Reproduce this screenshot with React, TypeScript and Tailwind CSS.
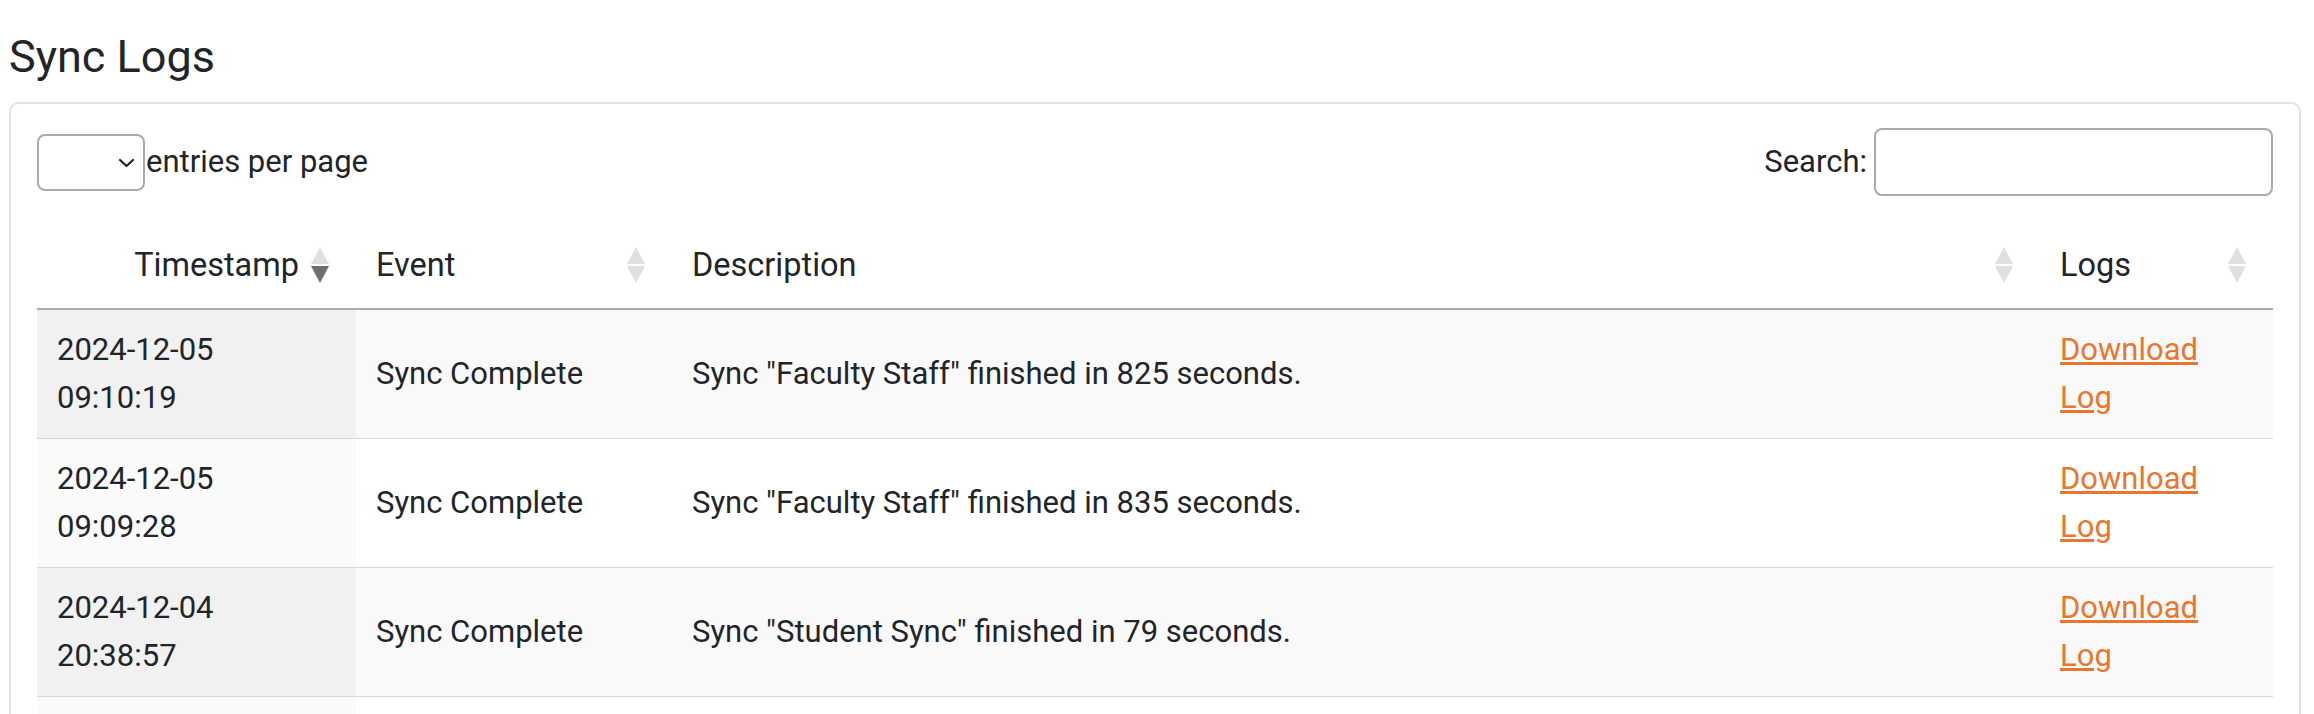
import React from 'react';

type LogRow = { date: string; time: string; event: string; desc: string };

const rows: LogRow[] = [
  { date: '2024-12-05', time: '09:10:19', event: 'Sync Complete', desc: 'Sync "Faculty Staff" finished in 825 seconds.' },
  { date: '2024-12-05', time: '09:09:28', event: 'Sync Complete', desc: 'Sync "Faculty Staff" finished in 835 seconds.' },
  { date: '2024-12-04', time: '20:38:57', event: 'Sync Complete', desc: 'Sync "Student Sync" finished in 79 seconds.' },
  { date: '2024-12-04', time: '20:37:41', event: 'Sync Complete', desc: 'Sync "Student Sync" finished in 81 seconds.' },
];

/** Sort arrows, DataTables style. dir: which half is dark. */
const SortIcon: React.FC<{ dir?: 'asc' | 'desc' }> = ({ dir }) => (
  <svg width="18" height="36" viewBox="0 0 18 36" className="shrink-0">
    <polygon points="9,0 18,17 0,17" fill={dir === 'asc' ? '#6e6e6e' : '#e0e0e0'} />
    <polygon points="0,19 18,19 9,36" fill={dir === 'desc' ? '#6e6e6e' : '#e0e0e0'} />
  </svg>
);

export default function App() {
  return (
    <div className="min-h-screen bg-white pl-[9px] pr-[13px] pt-[30px] font-['Roboto','Liberation_Sans',sans-serif] text-[31px] leading-[48px] text-[#212529]">
      <h3 className="text-[45px] leading-[54px] font-normal mb-[18px]">Sync Logs</h3>

      <div className="border-2 border-[#e2e2e2] rounded-[10px] px-[26px] pt-[24px] pb-[30px]">
        {/* controls */}
        <div className="flex items-center justify-between h-[68px] mb-[32px]">
          <div className="flex items-center gap-[1px]">
            <div className="relative w-[108px] h-[57px]">
              <select className="appearance-none w-full h-full border-2 border-[#ababab] rounded-[8px] bg-white outline-none" defaultValue="" />
              <svg width="17" height="10" viewBox="0 0 17 10" className="absolute right-[10px] top-[24px] pointer-events-none">
                <path d="M2 2 L8.5 8 L15 2" fill="none" stroke="#222" strokeWidth="2.2" strokeLinecap="round" strokeLinejoin="round" />
              </svg>
            </div>
            <span>entries per page</span>
          </div>
          <label className="flex items-center gap-[7px]">
            <span>Search:</span>
            <input className="w-[399px] h-[68px] border-2 border-[#ababab] rounded-[8px] px-3 outline-none" />
          </label>
        </div>

        <table className="w-full table-fixed border-collapse">
          <colgroup>
            <col className="w-[319px]" />
            <col className="w-[316px]" />
            <col />
            <col className="w-[233px]" />
          </colgroup>
          <thead>
            <tr className="border-b-2 border-[#ababab] text-[32.5px]">
              <th className="pt-[13px] pb-[19px] pr-[27px] font-normal">
                <div className="flex items-center justify-end gap-[12px]">
                  <span>Timestamp</span>
                  <SortIcon dir="desc" />
                </div>
              </th>
              {['Event', 'Description', 'Logs'].map(h => (
                <th key={h} className="pt-[13px] pb-[19px] pl-[20px] pr-[27px] font-normal text-left">
                  <div className="flex items-center justify-between">
                    <span>{h}</span>
                    <SortIcon />
                  </div>
                </th>
              ))}
            </tr>
          </thead>
          <tbody>
            {rows.map((r, i) => {
              const odd = i % 2 === 0;
              return (
                <tr key={i} className={`border-b border-[#d8d8d8] ${odd ? 'bg-[#f9f9f9]' : 'bg-white'}`}>
                  <td className={`py-4 px-[20px] align-middle ${odd ? 'bg-[#f1f1f1]' : 'bg-[#fafafa]'}`}>
                    <span className="block">{r.date}</span>
                    <span className="block">{r.time}</span>
                  </td>
                  <td className="py-4 px-[20px] align-middle">{r.event}</td>
                  <td className="py-4 px-[20px] align-middle">{r.desc}</td>
                  <td className="py-4 px-[20px] align-middle">
                    <a href="#" className="text-[#e9762f] underline">Download Log</a>
                  </td>
                </tr>
              );
            })}
          </tbody>
        </table>
      </div>
    </div>
  );
}
